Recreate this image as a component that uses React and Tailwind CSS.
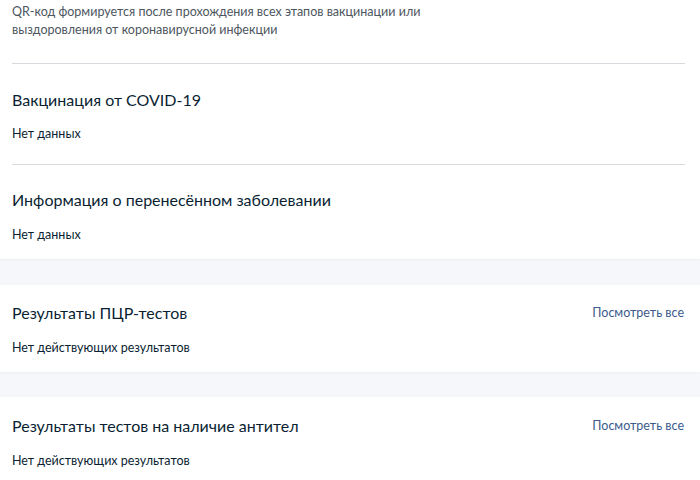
export default function App() {
  const font = { fontFamily: 'Lato, "Noto Sans", sans-serif' }
  return (
    <div className="min-h-[480px] w-[700px] bg-[#f5f7fa] text-[#0b1f33]" style={font}>
      {/* QR info card */}
      <div className="bg-white px-3 pb-[15px] shadow-[0_1px_2px_rgba(0,0,0,0.04)]">
        <p className="pt-[3px] text-[12.5px] leading-[18px] text-[#4d5660]">
          QR-код формируется после прохождения всех этапов вакцинации или
          <br />
          выздоровления от коронавирусной инфекции
        </p>
        <div className="mt-6 mr-[3px] border-t border-[#d6d9dd]" />
        <div className="pt-6 pb-[21px]">
          <h2 className="text-[16px] leading-6">Вакцинация от COVID-19</h2>
          <p className="mt-[13px] text-[12.5px] leading-[18px]">Нет данных</p>
        </div>
        <div className="mr-[3px] border-t border-[#d6d9dd]" />
        <div className="pt-[23px]">
          <h2 className="text-[16px] leading-6">Информация о перенесённом заболевании</h2>
          <p className="mt-[14px] text-[12.5px] leading-[18px]">Нет данных</p>
        </div>
      </div>

      <div className="mt-[26px] bg-white px-3 pt-4 pb-[15px] shadow-[0_1px_2px_rgba(0,0,0,0.04)]">
        <div className="flex items-center justify-between pr-[4px]">
          <h2 className="text-[16px] leading-6">Результаты ПЦР-тестов</h2>
          <a className="text-[12.5px] text-[#3b5a8c]">Посмотреть все</a>
        </div>
        <p className="mt-[14px] text-[12.5px] leading-[18px]">Нет действующих результатов</p>
      </div>

      <div className="mt-[25px] bg-white px-3 pt-[17px] pb-[15px]">
        <div className="flex items-center justify-between pr-[4px]">
          <h2 className="text-[16px] leading-6">Результаты тестов на наличие антител</h2>
          <a className="text-[12.5px] text-[#3b5a8c]">Посмотреть все</a>
        </div>
        <p className="mt-[14px] text-[12.5px] leading-[18px]">Нет действующих результатов</p>
      </div>
    </div>
  )
}
